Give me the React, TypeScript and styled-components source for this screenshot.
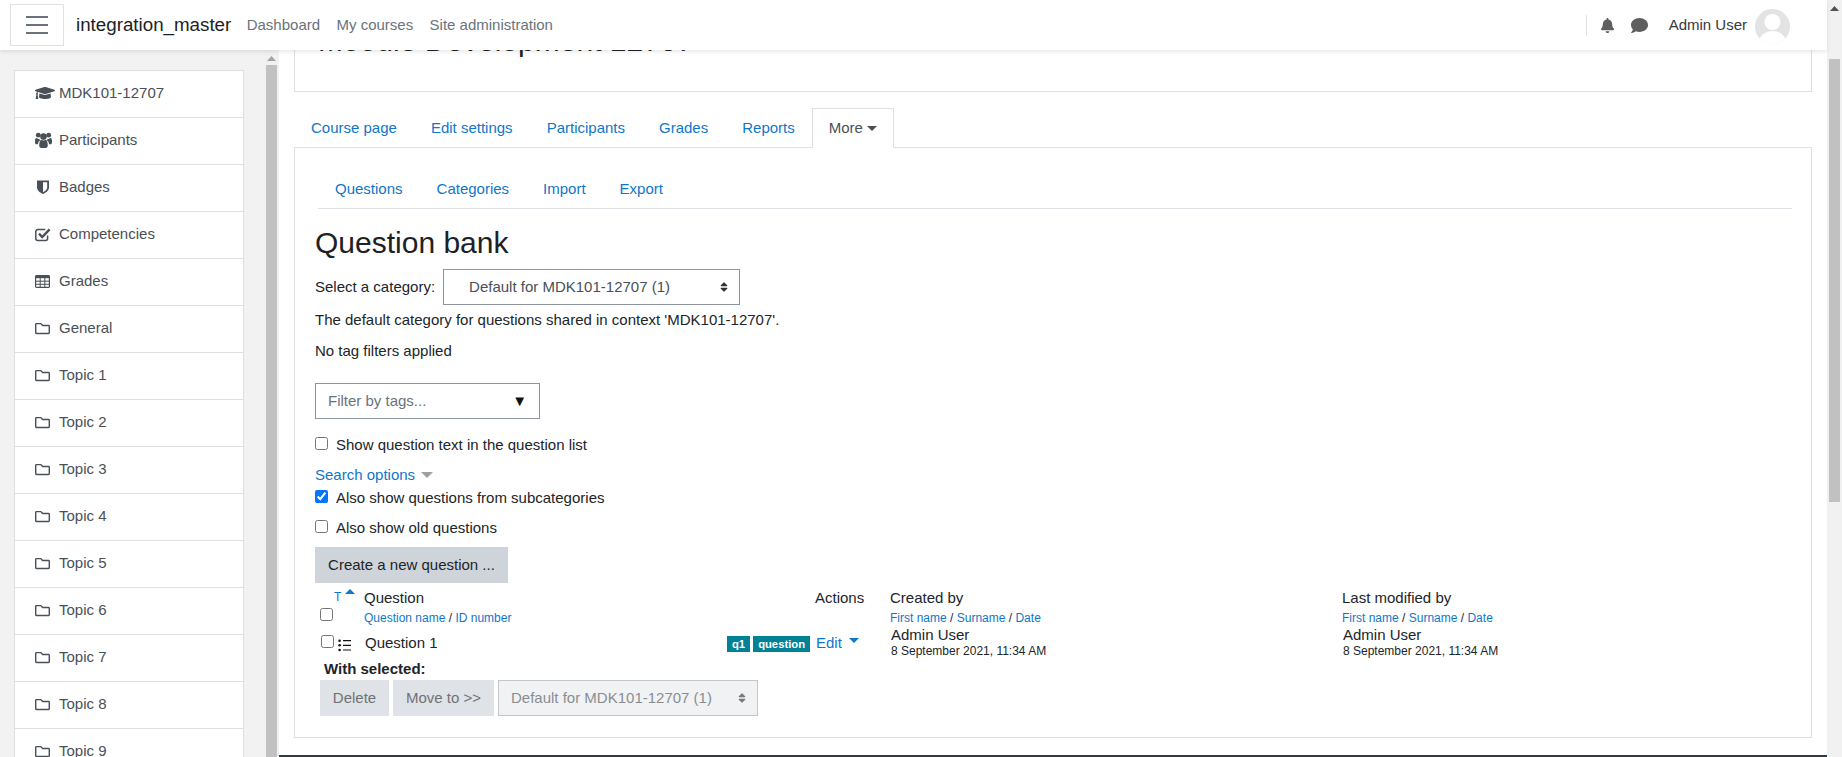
import React from "react";
import styled, { createGlobalStyle } from "styled-components";
import { FaBell, FaComment, FaGraduationCap, FaRegFolder, FaSort } from "react-icons/fa";

const Global = createGlobalStyle`
  html, body { margin: 0; padding: 0; height: 100%; overflow: hidden; background: #fff; }
  body { font: 15px/22.5px "Liberation Sans", Arial, sans-serif; color: #212529; }
  * { box-sizing: border-box; }
  input[type="checkbox"] { margin: 0; width: 13px; height: 13px; flex: none; }
`;

const LINK = "#0f77c9";

const Page = styled.div`
  display: flex;
  width: 1842px;
  height: 757px;
  overflow: hidden;
`;
const Column = styled.div`
  flex: 1;
  min-width: 0;
  display: flex;
  flex-direction: column;
`;
const Navbar = styled.header`
  position: relative;
  z-index: 2;
  flex: none;
  height: 50px;
  display: flex;
  align-items: center;
  padding: 0 0 0 10px;
  background: #fff;
  box-shadow: 0 2px 4px rgba(0, 0, 0, 0.09);
`;
const Hamburger = styled.button`
  width: 54px;
  height: 42px;
  padding: 0;
  background: #fff;
  border: 1px solid #dfe2e5;
  display: flex;
  align-items: center;
  justify-content: center;
`;
const Brand = styled.span`
  margin-left: 12px;
  margin-right: -1px;
  font-size: 18.75px;
  color: #1d2125;
`;
const NavLink = styled.span`
  margin-left: 16.4px;
  color: #6a737b;
`;
const NavRight = styled.div`
  margin-left: auto;
  display: flex;
  align-items: center;
  height: 100%;
  color: #5f5f5f;
`;
const Divider = styled.span`
  width: 1px;
  height: 21px;
  background: #dee2e6;
  margin-right: 13px;
`;
const CommentSlot = styled.span`
  margin-left: 16px;
  display: flex;
`;
const UserName = styled.span`
  margin-left: 21px;
  color: #373a3c;
`;
const Avatar = styled.svg`
  margin: 3px 37px 0 8px;
  width: 35px;
  height: 35px;
`;

const Below = styled.div`
  flex: 1;
  min-height: 0;
  display: flex;
`;
const Sidebar = styled.nav`
  flex: none;
  width: 279px;
  background: #f2f2f2;
  display: flex;
  overflow: hidden;
`;
const SideList = styled.ul`
  list-style: none;
  margin: 20px 0 0 14px;
  padding: 0;
  width: 230px;
  height: fit-content;
  background: #fff;
  border: 1px solid #dfdfdf;
  flex: none;
`;
const SideItem = styled.li`
  height: 47px;
  display: flex;
  align-items: center;
  padding: 0 0 2px 20px;
  color: #495057;
  border-bottom: 1px solid #dfdfdf;
  &:last-child { border-bottom: 0; }
`;
const SideIcon = styled.span`
  width: 24px;
  flex: none;
  display: flex;
  align-items: center;
  color: #495057;
`;
const Track = styled.div`
  margin-left: auto;
  flex: none;
  width: 15px;
  height: 100%;
  background: #f1f1f1;
  display: flex;
  flex-direction: column;
  align-items: center;
`;
const TrackArrow = styled.svg`
  width: 9px;
  height: 5px;
  margin-top: 6px;
  flex: none;
`;
const Thumb = styled.div<{ $top: number; $height?: number }>`
  width: 11px;
  margin-top: ${(p) => p.$top}px;
  ${(p) => (p.$height ? `height: ${p.$height}px;` : "flex: 1;")}
  background: #c1c1c1;
`;

const Main = styled.main`
  flex: 1;
  min-width: 0;
  background: #fff;
  display: flex;
  flex-direction: column;
  overflow: hidden;
`;
const Content = styled.div`
  flex: 1;
  min-height: 0;
  padding: 0 15px;
`;
const HeaderCard = styled.div`
  margin-top: -28px;
  height: 70px;
  border: 1px solid #dfdfdf;
  padding-left: 23px;
`;
const PageTitle = styled.h1`
  margin: 0;
  font-size: 30px;
  line-height: 36px;
  font-weight: 400;
  color: #1d2125;
`;
const Tabs = styled.div`
  display: flex;
  margin-top: 16px;
  margin-bottom: -1px;
  position: relative;
`;
const Tab = styled.span<{ $active?: boolean }>`
  height: 40px;
  padding: 0 16px;
  display: flex;
  align-items: center;
  border: 1px solid ${(p) => (p.$active ? "#dfdfdf" : "transparent")};
  border-bottom-color: ${(p) => (p.$active ? "#fff" : "transparent")};
  color: ${(p) => (p.$active ? "#495057" : LINK)};
`;
const MoreCaret = styled.span`
  margin-left: 4px;
  width: 0;
  height: 0;
  border: 5px solid transparent;
  border-top-color: #495057;
  border-bottom: 0;
`;
const Panel = styled.section`
  height: 591px;
  border: 1px solid #dfdfdf;
  padding: 21px 20px 0;
`;
const SubTabs = styled.div`
  display: flex;
  height: 40px;
  margin: 0 -1px 0 3px;
  border-bottom: 1px solid #dee2e6;
`;
const SubTab = styled.span`
  padding: 1px 17px 0;
  height: 39px;
  display: flex;
  align-items: center;
  color: ${LINK};
`;
const SectionTitle = styled.h2`
  margin: 15.5px 0 0;
  font-size: 30px;
  line-height: 36px;
  font-weight: 400;
  color: #1d2125;
`;
const CategoryRow = styled.div`
  display: flex;
  align-items: center;
  margin-top: 8.5px;
  gap: 8px;
`;
const SelectBox = styled.div<{ $disabled?: boolean }>`
  height: 36px;
  width: ${(p) => (p.$disabled ? "260px" : "297px")};
  display: flex;
  align-items: center;
  justify-content: space-between;
  padding: 0 9px 0 ${(p) => (p.$disabled ? "12px" : "25px")};
  border: 1px solid ${(p) => (p.$disabled ? "#a6a9ac" : "#8f959e")};
  color: #495057;
  background: ${(p) => (p.$disabled ? "#e9ecef" : "#fff")};
`;
const Para = styled.p<{ $top: number }>`
  margin: ${(p) => p.$top}px 0 0;
`;
const TagFilter = styled.div`
  margin-top: 21px;
  width: 225px;
  height: 36px;
  border: 1px solid #8f959e;
  padding: 0 12px;
  display: flex;
  align-items: center;
  justify-content: space-between;
  color: #6a737b;
`;
const DownMark = styled.span`
  color: #111;
  font-size: 15px;
`;
const CheckRow = styled.label<{ $top: number }>`
  display: flex;
  align-items: center;
  gap: 8px;
  height: 22px;
  margin-top: ${(p) => p.$top}px;
  & > input { margin-top: -3px; }
`;
const SearchToggle = styled.div`
  margin-top: 8px;
  display: flex;
  align-items: center;
  gap: 6px;
  color: ${LINK};
  height: 22px;
`;
const GreyCaret = styled.span`
  width: 0;
  height: 0;
  border: 6px solid transparent;
  border-top-color: #a0a0a0;
  border-bottom: 0;
`;
const Button = styled.button<{ $w: number }>`
  width: ${(p) => p.$w}px;
  height: 36px;
  border: 0;
  padding: 0;
  font: inherit;
  color: #212529;
  background: #ced4da;
  flex: none;
`;
const CreateRow = styled.div`
  margin-top: 8px;
`;
const Grid = styled.div`
  display: grid;
  grid-template-columns: 49px 451px 75px 452px 1fr;
  margin-top: 6px;
`;
const TypeHead = styled.div`
  height: 44px;
  display: flex;
  flex-direction: column;
`;
const TypeTop = styled.div`
  height: 14px;
  padding-left: 19px;
  display: flex;
  align-items: flex-start;
  gap: 4px;
  font-size: 12px;
  line-height: 16px;
  color: ${LINK};
`;
const SortCaret = styled.span`
  width: 0;
  height: 0;
  border: 5px solid transparent;
  border-bottom-color: ${LINK};
  border-top: 0;
`;
const HeadBox = styled.span`
  margin: 5px 0 0 5px;
  display: flex;
`;
const HeadCell = styled.div`
  display: flex;
  flex-direction: column;
  height: 44px;
`;
const HeadLabel = styled.span`
  height: 18px;
  line-height: 18px;
`;
const Small = styled.span`
  margin-top: 4px;
  font-size: 12px;
  line-height: 14px;
  color: ${LINK};
  & > i { font-style: normal; color: #212529; }
`;
const RowType = styled.div`
  display: flex;
  align-items: flex-start;
  gap: 4px;
  padding: 2px 0 0 6px;
`;
const ListGlyph = styled.svg`
  width: 13px;
  height: 13px;
  margin-top: 4px;
  flex: none;
`;
const RowName = styled.div`
  display: flex;
  justify-content: space-between;
  align-items: flex-start;
  padding: 0 5px 0 1px;
  margin-top: -1px;
`;
const Badges = styled.div`
  display: flex;
  gap: 3px;
  margin-top: 4px;
`;
const Badge = styled.span`
  height: 16px;
  padding: 0 5px;
  background: #008196;
  color: #fff;
  font-size: 11.25px;
  font-weight: 700;
  line-height: 16px;
`;
const EditCell = styled.div`
  display: flex;
  align-items: flex-start;
  gap: 7px;
  color: ${LINK};
  padding-left: 1px;
  height: 34px;
  margin-top: -1px;
`;
const EditCaret = styled.span`
  margin-top: 6px;
  width: 0;
  height: 0;
  border: 5px solid transparent;
  border-top-color: ${LINK};
  border-bottom: 0;
`;
const Author = styled.div`
  padding-left: 1px;
  display: flex;
  flex-direction: column;
  margin-top: -7px;
`;
const AuthorName = styled.span`
  line-height: 17px;
`;
const AuthorDate = styled.span`
  font-size: 12px;
  line-height: 16px;
`;
const WithSelected = styled.div`
  margin: -7px 0 0 9px;
  font-weight: 700;
  line-height: 20px;
`;
const BulkRow = styled.div`
  display: flex;
  gap: 4px;
  margin: 1px 0 0 5px;
  opacity: 0.65;
`;
const Footer = styled.footer`
  flex: none;
  height: 2px;
  background: #343a40;
`;

const UsersIcon = () => (
  <svg width="17" height="16" viewBox="0 0 17 16" fill="#495057">
    <circle cx="3.3" cy="3.2" r="2.4" />
    <circle cx="13.7" cy="3.2" r="2.4" />
    <circle cx="8.5" cy="4.6" r="3.3" />
    <path d="M4.2 13.6c0-3.4 1-5.6 2.2-5.8.6.5 1.3.8 2.1.8s1.5-.3 2.1-.8c1.2.2 2.2 2.4 2.2 5.8 0 1.4-.9 2.4-2.1 2.4H6.3c-1.2 0-2.1-1-2.1-2.4z" />
    <path d="M0 9.4c0-2.2.5-3.3 1.5-3.3.5.5 1.2.8 1.9.8.5 0 .8-.1 1.1-.2-.1.7.2 1.3.6 1.9-1.1.5-2 1.8-2.2 3.7H1.3C.5 12.3 0 11.5 0 9.4z" />
    <path d="M17 9.4c0-2.2-.5-3.3-1.5-3.3-.5.5-1.2.8-1.9.8-.5 0-.8-.1-1.1-.2.1.7-.2 1.3-.6 1.9 1.1.5 2 1.8 2.2 3.7h1.6c.8 0 1.3-.8 1.3-2.9z" />
  </svg>
);
const ShieldIcon = () => (
  <svg width="16" height="14" viewBox="-2 0 16 14">
    <path d="M0 .4h12v7.1c0 3-3.2 5.2-6 6.5C3.2 12.7 0 10.5 0 7.5z" fill="#495057" />
    <path d="M6 2.2h4.2v5.4c0 2-2.2 3.6-4.2 4.6z" fill="#fff" />
  </svg>
);
const CheckIcon = () => (
  <svg width="16" height="15" viewBox="0 0 16 15" fill="none">
    <path
      d="M12.6 8.5v2.9c0 1.2-.8 2-2 2H2.8c-1.2 0-2-.8-2-2V4.6c0-1.2.8-2 2-2h7.5"
      stroke="#495057"
      strokeWidth="1.5"
    />
    <path d="M4 6.7l3.2 3.3L14.6 2.4" stroke="#495057" strokeWidth="2.4" />
  </svg>
);
const TableIcon = () => (
  <svg width="15" height="13" viewBox="0 0 15 13" fill="none">
    <rect x=".6" y=".6" width="13.8" height="11.8" rx="1" stroke="#495057" strokeWidth="1.2" />
    <rect x=".6" y=".6" width="13.8" height="2.6" fill="#495057" />
    <path d="M5.2 3v9M9.8 3v9M1 6.2h13M1 9.3h13" stroke="#495057" strokeWidth="1" />
  </svg>
);

const sideItems: [string, React.ReactNode][] = [
  ["MDK101-12707", <FaGraduationCap size={20} />],
  ["Participants", <UsersIcon />],
  ["Badges", <ShieldIcon />],
  ["Competencies", <CheckIcon />],
  ["Grades", <TableIcon />],
  ["General", <FaRegFolder size={15} />],
  ...[1, 2, 3, 4, 5, 6, 7, 8, 9].map(
    (n) => [`Topic ${n}`, <FaRegFolder size={15} />] as [string, React.ReactNode],
  ),
];

function ScrollBar({ top, height, arrow }: { top: number; height?: number; arrow: string }) {
  return (
    <Track>
      <TrackArrow viewBox="0 0 9 5">
        <path d="M4.5 0L9 5H0z" fill={arrow} />
      </TrackArrow>
      <Thumb $top={top} $height={height} />
    </Track>
  );
}

function SortingLinks({ first, second, third }: { first: string; second: string; third?: string }) {
  return (
    <Small>
      {first} <i>/</i> {second}
      {third ? (
        <>
          {" "}
          <i>/</i> {third}
        </>
      ) : null}
    </Small>
  );
}

export default function App() {
  return (
    <Page>
      <Global />
      <Column>
        <Navbar>
          <Hamburger aria-label="menu">
            <svg width="22" height="18" viewBox="0 0 22 18">
              <path d="M0 1h22M0 9h22M0 17h22" stroke="#6a737b" strokeWidth="2" />
            </svg>
          </Hamburger>
          <Brand>integration_master</Brand>
          <NavLink>Dashboard</NavLink>
          <NavLink>My courses</NavLink>
          <NavLink>Site administration</NavLink>
          <NavRight>
            <Divider />
            <FaBell size={15} />
            <CommentSlot>
              <FaComment size={17} />
            </CommentSlot>
            <UserName>Admin User</UserName>
            <Avatar viewBox="0 0 35 35">
              <defs>
                <clipPath id="av">
                  <circle cx="17.5" cy="17.5" r="17.5" />
                </clipPath>
              </defs>
              <g clipPath="url(#av)">
                <rect width="35" height="35" fill="#e3e3e3" />
                <circle cx="17.5" cy="13" r="8" fill="#fff" />
                <ellipse cx="17.5" cy="32" rx="13" ry="10" fill="#fff" />
              </g>
            </Avatar>
          </NavRight>
        </Navbar>
        <Below>
          <Sidebar>
            <SideList>
              {sideItems.map(([label, icon]) => (
                <SideItem key={label}>
                  <SideIcon>{icon}</SideIcon>
                  {label}
                </SideItem>
              ))}
            </SideList>
            <ScrollBar top={4} arrow="#a3a3a3" />
          </Sidebar>
          <Main>
            <Content>
              <HeaderCard>
                <PageTitle>Moodle Development 12707</PageTitle>
              </HeaderCard>
              <Tabs>
                <Tab>Course page</Tab>
                <Tab>Edit settings</Tab>
                <Tab>Participants</Tab>
                <Tab>Grades</Tab>
                <Tab>Reports</Tab>
                <Tab $active>
                  More
                  <MoreCaret />
                </Tab>
              </Tabs>
              <Panel>
                <SubTabs>
                  <SubTab>Questions</SubTab>
                  <SubTab>Categories</SubTab>
                  <SubTab>Import</SubTab>
                  <SubTab>Export</SubTab>
                </SubTabs>
                <SectionTitle>Question bank</SectionTitle>
                <CategoryRow>
                  Select a category:
                  <SelectBox>
                    Default for MDK101-12707 (1)
                    <FaSort size={12} color="#333" />
                  </SelectBox>
                </CategoryRow>
                <Para $top={4}>The default category for questions shared in context 'MDK101-12707'.</Para>
                <Para $top={8}>No tag filters applied</Para>
                <TagFilter>
                  Filter by tags...
                  <DownMark>▼</DownMark>
                </TagFilter>
                <CheckRow $top={15}>
                  <input type="checkbox" />
                  Show question text in the question list
                </CheckRow>
                <SearchToggle>
                  Search options <GreyCaret />
                </SearchToggle>
                <CheckRow $top={1}>
                  <input type="checkbox" defaultChecked />
                  Also show questions from subcategories
                </CheckRow>
                <CheckRow $top={8}>
                  <input type="checkbox" />
                  Also show old questions
                </CheckRow>
                <CreateRow>
                  <Button $w={193}>Create a new question ...</Button>
                </CreateRow>
                <Grid>
                  <TypeHead>
                    <TypeTop>
                      T
                      <SortCaret />
                    </TypeTop>
                    <HeadBox>
                      <input type="checkbox" />
                    </HeadBox>
                  </TypeHead>
                  <HeadCell>
                    <HeadLabel>Question</HeadLabel>
                    <SortingLinks first="Question name" second="ID number" />
                  </HeadCell>
                  <HeadCell>
                    <HeadLabel>Actions</HeadLabel>
                  </HeadCell>
                  <HeadCell>
                    <HeadLabel>Created by</HeadLabel>
                    <SortingLinks first="First name" second="Surname" third="Date" />
                  </HeadCell>
                  <HeadCell>
                    <HeadLabel>Last modified by</HeadLabel>
                    <SortingLinks first="First name" second="Surname" third="Date" />
                  </HeadCell>

                  <RowType>
                    <input type="checkbox" />
                    <ListGlyph viewBox="0 0 13 13">
                      <path d="M5 1.7h8M5 6.3h8M5 11h8" stroke="#111" strokeWidth="1.2" />
                      <circle cx="1.6" cy="1.7" r="1.3" fill="#111" />
                      <circle cx="1.6" cy="6.3" r="1.3" fill="#111" />
                      <circle cx="1.6" cy="11" r="1.3" fill="#111" />
                    </ListGlyph>
                  </RowType>
                  <RowName>
                    <span>Question 1</span>
                    <Badges>
                      <Badge>q1</Badge>
                      <Badge>question</Badge>
                    </Badges>
                  </RowName>
                  <EditCell>
                    Edit <EditCaret />
                  </EditCell>
                  <Author>
                    <AuthorName>Admin User</AuthorName>
                    <AuthorDate>8 September 2021, 11:34 AM</AuthorDate>
                  </Author>
                  <Author>
                    <AuthorName>Admin User</AuthorName>
                    <AuthorDate>8 September 2021, 11:34 AM</AuthorDate>
                  </Author>
                </Grid>
                <WithSelected>With selected:</WithSelected>
                <BulkRow>
                  <Button $w={69}>Delete</Button>
                  <Button $w={101}>Move to &gt;&gt;</Button>
                  <SelectBox $disabled>
                    Default for MDK101-12707 (1)
                    <FaSort size={12} color="#333" />
                  </SelectBox>
                </BulkRow>
              </Panel>
            </Content>
            <Footer />
          </Main>
        </Below>
      </Column>
      <ScrollBar top={48} height={443} arrow="#505050" />
    </Page>
  );
}
